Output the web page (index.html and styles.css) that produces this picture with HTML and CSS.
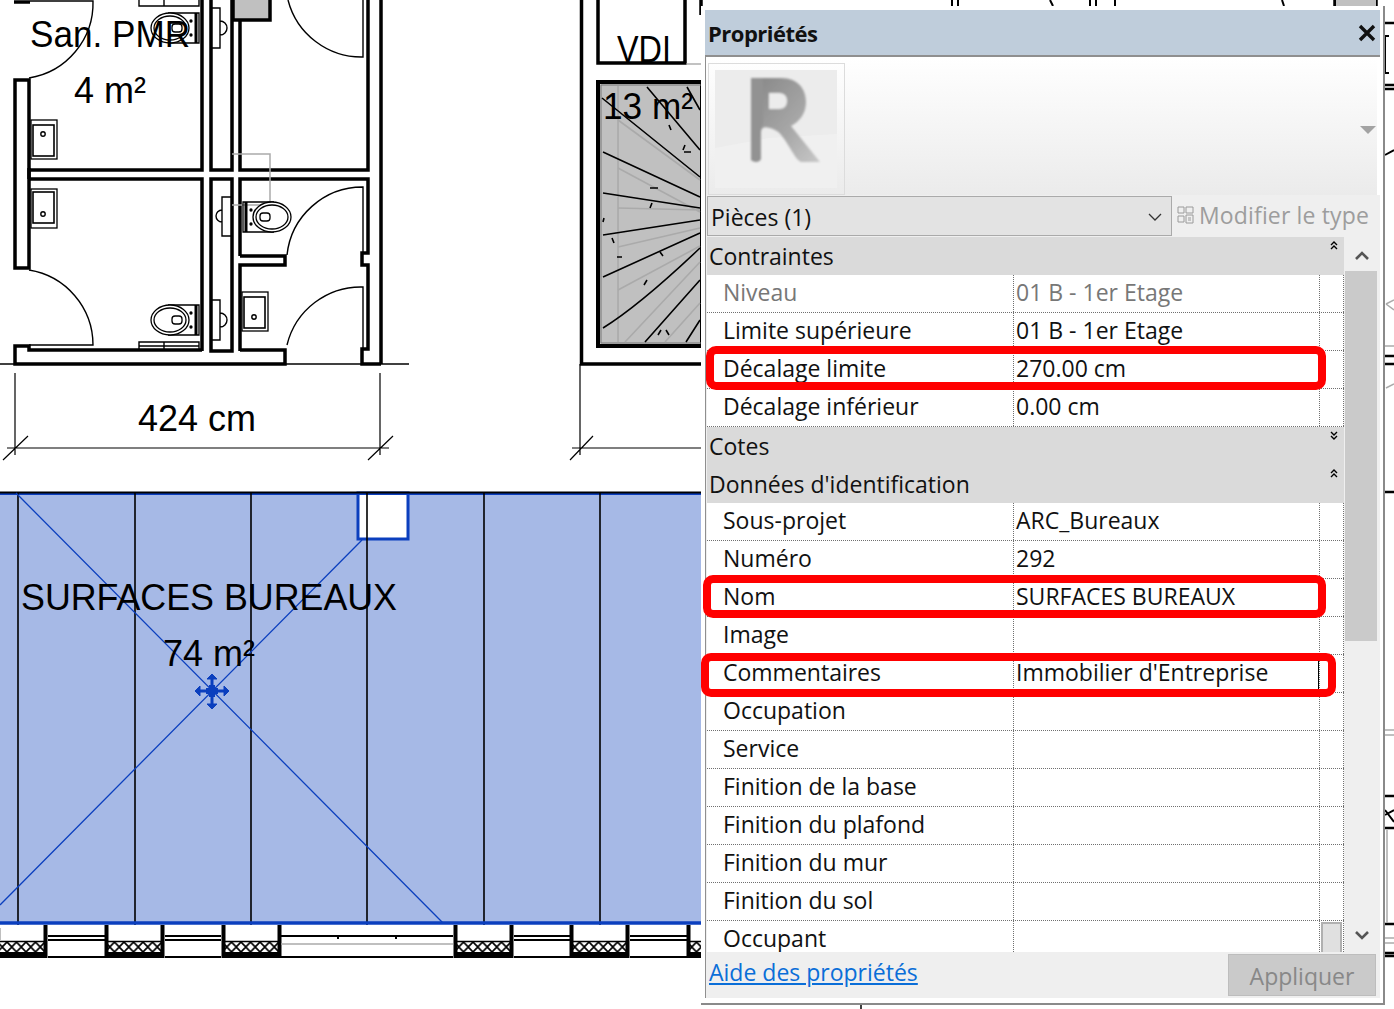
FILE: index.html
```html
<!DOCTYPE html>
<html lang="fr">
<head>
    <meta charset="UTF-8">
    <title>Propriétés</title>
    <link rel="stylesheet" href="styles.css">
</head>
<body>
<div class="canvas">
    <svg class="plan" width="1394" height="1009" viewBox="0 0 1394 1009">
        <defs>
            <pattern id="hatch" width="9.5" height="10" patternUnits="userSpaceOnUse" x="0" y="942">
                <path d="M0 0L9.5 10M9.5 0L0 10" stroke="#000" stroke-width="1.7" fill="none"/>
            </pattern>
            <g id="wc" fill="none" stroke="#000" stroke-width="1.3">
                <path d="M168 305H199V335H168"/>
                <path d="M196 305V335" stroke-width="3"/>
                <ellipse cx="170" cy="320" rx="19" ry="15" fill="#fff"/>
                <ellipse cx="170" cy="320" rx="16" ry="12"/>
                <rect x="172" y="316" width="10" height="8" rx="3"/>
                <circle cx="191" cy="313" r="1" fill="#000"/>
                <circle cx="191" cy="327" r="1" fill="#000"/>
            </g>
            <g id="sink" fill="none" stroke="#000" stroke-width="1.3">
                <rect x="0" y="0" width="26" height="39"/>
                <rect x="2" y="5" width="21" height="31" stroke-width="1.6"/>
            </g>
            <g id="window-block">
                <rect x="0" y="942" width="59" height="10" fill="url(#hatch)"/>
                <path d="M0 941.5H59" stroke="#000" stroke-width="1.5"/>
                <path d="M1.5 925V958M57.5 925V958" stroke="#000" stroke-width="4"/>
                <path d="M0 955H59" stroke="#000" stroke-width="6"/>
            </g>
        </defs>

        <!-- sanitaires -->
        <g fill="none" stroke="#000" stroke-width="3.5">
            <path d="M15 80H29V268H15ZM29 170H202V0M29 179H202V351M211 0V170H232V0M211 351V179H232V351ZM240 20V170H368V0M381 0V364"/>
            <path d="M29 179V168M240 256V179H368V253H362V265H368V349H362V364H381"/>
            <path d="M240 351V265H285V256H240M240 350H285V364H15V346H29V350H202"/>
            <path d="M233 0V20H270V0" fill="#c0c0c0"/>
            <path d="M14 2H30"/>
        </g>
        <g fill="none" stroke="#000" stroke-width="1.4">
            <path d="M0 364H409"/>
            <path d="M30 1H93A76 76 0 0 1 29 78"/>
            <path d="M288 0A76 76 0 0 0 363 57V0"/>
            <path d="M29 270A76 76 0 0 1 93 345H29"/>
            <path d="M287 255A76 76 0 0 1 363 187V253"/>
            <path d="M287 345A76 76 0 0 1 363 287V350"/>
            <path d="M139 350V342H199V350M139 346H199M164 342V350"/>
            <path d="M139 0V6H199V0M164 0V6"/>
            <path d="M212 8H220V48H212M220 21A6 6 0 0 1 220 35"/>
            <path d="M231 197H222V236H231M222 210A6 6 0 0 0 222 222"/>
            <path d="M212 300H220V340H212M220 313A6 6 0 0 1 220 327"/>
            <circle cx="43" cy="134" r="2.2"/>
            <circle cx="43" cy="214" r="2.2"/>
            <circle cx="254" cy="317" r="2.2"/>
        </g>
        <use href="#sink" x="31" y="120"/>
        <use href="#sink" transform="translate(31 228) scale(1 -1)"/>
        <use href="#sink" x="242" y="292"/>
        <use href="#wc"/>
        <use href="#wc" y="-292"/>
        <path d="M232 154H270V205H232" fill="none" stroke="#aaa" stroke-width="1.5"/>
        <use href="#wc" transform="translate(442 -103) scale(-1 1)"/>

        <text class="cad" x="30" y="47" textLength="160" lengthAdjust="spacingAndGlyphs">San. PMR</text>
        <text class="cad" x="74" y="103" textLength="72" lengthAdjust="spacingAndGlyphs">4 m²</text>

        <!-- cote 424 -->
        <g fill="none" stroke="#000" stroke-width="1.2">
            <path d="M7 448H389M15 373V455M380 373V455M3 460L28 436M368 460L393 436"/>
            <path d="M572 448H702M580 364V455M570 460L593 436"/>
        </g>
        <text class="cad" x="138" y="431" textLength="118" lengthAdjust="spacingAndGlyphs">424 cm</text>

        <!-- VDI + escalier -->
        <g fill="none" stroke="#000" stroke-width="3.5">
            <path d="M581.5 0V364H702"/>
            <path d="M598 0V63H685V0"/>
            <path d="M701 0V15"/>
        </g>
        <path d="M686 64H704" stroke="#999" stroke-width="1.2"/>
        <text class="cad" x="617" y="62" textLength="54" lengthAdjust="spacingAndGlyphs">VDI</text>
        <rect x="598" y="82" width="104" height="264" fill="#c0c0c0" stroke="#000" stroke-width="4"/>
        <path d="M601 85H702M601 85V343H702" fill="none" stroke="#777" stroke-width="1"/>
        <g fill="none" stroke="#aaa" stroke-width="1.6">
            <path d="M618 86V342"/>
            <path d="M618 120L700 180M618 168L700 212M618 208L700 210M618 247L700 228M618 290L700 246M625 342L700 262M665 342L700 303"/>
        </g>
        <g fill="none" stroke="#000" stroke-width="1.6">
            <path d="M602 98L700 177M647 87L700 150M687 87L700 110M603 152L700 197M603 193L700 208M603 235L700 220M603 277L700 233M603 328Q640 305 700 248M645 342L700 280M686 342L700 320"/>
            <path d="M669 125L671 130M685 145L683 150M684 152H691M650 188H658M650 208L652 203M604 218L603 222M612 238L614 243M617 257H622M660 252L663 256M644 285L647 280M658 335L661 330M666 330L669 335"/>
        </g>
        <text class="cad" x="603" y="119" textLength="90" lengthAdjust="spacingAndGlyphs">13 m²</text>

        <!-- piece selectionnee -->
        <rect x="0" y="493" width="702" height="430" fill="#a6b9e6"/>
        <rect x="358" y="493" width="50" height="46" fill="#fff" stroke="#0b3fbe" stroke-width="3"/>
        <path d="M0 494H702" stroke="#0b3fbe" stroke-width="2"/>
        <path d="M0 492.5H702" stroke="#000" stroke-width="2"/>
        <path d="M18 493V925M135 493V925M251 493V925M367 493V925M484 493V925M600 493V925" stroke="#000" stroke-width="1.6" fill="none"/>
        <path d="M16 493L443 923M362 540L0 905" stroke="#0b3fbe" stroke-width="1.3" fill="none"/>
        <path d="M0 923H702" stroke="#0b3fbe" stroke-width="3.5"/>
        <text class="cad" x="21" y="610" textLength="376" lengthAdjust="spacingAndGlyphs">SURFACES BUREAUX</text>
        <text class="cad" x="163" y="666" textLength="92" lengthAdjust="spacingAndGlyphs">74 m²</text>
        <g stroke="#0b3fbe" fill="#0b3fbe">
            <path d="M196 691H228M212 675V708" stroke-width="3"/>
            <path d="M195 691L200 686V696ZM229 691L224 686V696ZM212 674L207 679H217ZM212 709L207 704H217Z" stroke-width="1"/>
            <path d="M206 688H218V694H206ZM209 685H215V697H209Z" stroke="none"/>
        </g>

        <!-- bandeau fenetres -->
        <use href="#window-block" x="-12"/>
        <use href="#window-block" x="105"/>
        <use href="#window-block" x="222"/>
        <use href="#window-block" x="454"/>
        <use href="#window-block" x="570"/>
        <use href="#window-block" x="687"/>
        <g stroke="#000" stroke-width="2" fill="none">
            <path d="M48 936H105M48 940H105M48 957H105M165 936H221M165 940H221M165 957H221"/>
            <path d="M281 936H453M281 957H453M514 936H570M514 940H570M514 957H570M630 936H687M630 940H687M630 957H687"/>
            <path d="M338 936V939M396 936V939"/>
        </g>
        <path d="M281 944H453M0 928V940" stroke="#aaa" stroke-width="1.5" fill="none"/>

        <!-- bord haut et droit -->
        <g stroke="#000" fill="none">
            <path d="M1335 0V6M1376 0V6" stroke-width="3.5"/>
            <path d="M1090 0V6M1096 0V6M1115 0V6M952 0V6M958 0V6M1050 0L1053 6M1282 0L1284 6" stroke-width="2"/>
            <path d="M1385 23H1394M1385 85H1394M1385 89H1394M1385 356H1394M1385 364H1394M1385 492H1394M1385 796H1394M1385 828H1394M1385 924H1394M1385 953H1394M1385 956H1394" stroke-width="2.5"/>
            <path d="M1389 36H1385V73H1389M1385 155L1394 150M1385 815L1394 810M1385 810L1394 822" stroke-width="2"/>
            <path d="M861 1003V1009" stroke-width="1.5"/>
        </g>
        <rect x="1336" y="0" width="40" height="6" fill="#c0c0c0"/>
        <path d="M1386 304L1394 300M1386 304L1394 310M1385 346H1394M1386 388L1394 384M1385 730H1394M1385 735H1394M1387 830V923M1385 938H1394M1385 943H1394" stroke="#aaa" stroke-width="1.5" fill="none"/>
    </svg>

    <div class="props-window">
        <div class="props-title">
            <span>Propriétés</span>
            <svg class="close-icon" width="18" height="18" viewBox="0 0 18 18"><path d="M2 2L16 16M16 2L2 16" stroke="#111" stroke-width="3.4" fill="none"/></svg>
        </div>
        <div class="preview">
            <div class="thumb">
                <svg width="135" height="130" viewBox="0 0 135 130">
                    <defs>
                        <linearGradient id="rgrad" x1="0" y1="0" x2="1" y2="1">
                            <stop offset="0" stop-color="#868686"/>
                            <stop offset="0.6" stop-color="#a8a8a8"/>
                            <stop offset="1" stop-color="#c8c8c8"/>
                        </linearGradient>
                        <filter id="soft"><feGaussianBlur stdDeviation="1.1"/></filter>
                    </defs>
                    <rect x="6" y="6" width="122" height="118" fill="#ececec"/>
                    <path d="M6 84L60 74L128 70V124H6Z" fill="#f0f0f0"/>
                    <g filter="url(#soft)">
                        <path d="M42 14H72C90 14 97 26 97 38C97 50 90 58 82 62L111 98H92C84 94 76 70 66 66C58 62 52 62 52 68V94C52 98 46 99 42 96Z" fill="url(#rgrad)"/>
                        <path d="M60 29H70C76 29 78 33 78 37C78 42 75 45 70 45H60Z" fill="#ececec"/>
                        <path d="M42 14L54 14V60C50 64 52 90 52 94C52 98 46 99 42 96Z" fill="#929292"/>
                    </g>
                </svg>
            </div>
            <div class="preview-arrow"></div>
        </div>
        <div class="type-bar">
            <div class="type-combo">
                <span>Pièces (1)</span>
                <svg width="14" height="8" viewBox="0 0 14 8"><path d="M1 1L7 7L13 1" stroke="#333" stroke-width="1.3" fill="none"/></svg>
            </div>
            <div class="edit-type">
                <svg width="17" height="18" viewBox="0 0 17 18"><path d="M1 1H7V7H1ZM1 10H7V16H1ZM9 1H16V7H9ZM9 9H16V17H9ZM11 12H14M11 14H14" stroke="#9a9a9a" fill="none"/></svg>
                <span>Modifier le type</span>
            </div>
        </div>
        <div class="props-body">
            <div class="grid">
                <div class="section">Contraintes<svg class="fold" width="8" height="11" viewBox="0 0 8 11"><path d="M1 5L4 2L7 5M1 9L4 6L7 9" stroke="#000" stroke-width="1.4" fill="none"/></svg></div>
                <div class="row"><div class="label muted">Niveau</div><div class="value muted">01 B - 1er Etage</div><div class="extra"></div></div>
                <div class="row"><div class="label">Limite supérieure</div><div class="value">01 B - 1er Etage</div><div class="extra"></div></div>
                <div class="row"><div class="label">Décalage limite</div><div class="value">270.00 cm</div><div class="extra"></div></div>
                <div class="row"><div class="label">Décalage inférieur</div><div class="value">0.00 cm</div><div class="extra"></div></div>
                <div class="section">Cotes<svg class="fold" width="8" height="11" viewBox="0 0 8 11"><path d="M1 2L4 5L7 2M1 6L4 9L7 6" stroke="#000" stroke-width="1.4" fill="none"/></svg></div>
                <div class="section">Données d'identification<svg class="fold" width="8" height="11" viewBox="0 0 8 11"><path d="M1 5L4 2L7 5M1 9L4 6L7 9" stroke="#000" stroke-width="1.4" fill="none"/></svg></div>
                <div class="row"><div class="label">Sous-projet</div><div class="value">ARC_Bureaux</div><div class="extra"></div></div>
                <div class="row"><div class="label">Numéro</div><div class="value">292</div><div class="extra"></div></div>
                <div class="row"><div class="label">Nom</div><div class="value">SURFACES BUREAUX</div><div class="extra"></div></div>
                <div class="row"><div class="label">Image</div><div class="value"></div><div class="extra"></div></div>
                <div class="row"><div class="label">Commentaires</div><div class="value editing">Immobilier d'Entreprise</div><div class="extra"></div></div>
                <div class="row"><div class="label">Occupation</div><div class="value"></div><div class="extra"></div></div>
                <div class="row"><div class="label">Service</div><div class="value"></div><div class="extra"></div></div>
                <div class="row"><div class="label">Finition de la base</div><div class="value"></div><div class="extra"></div></div>
                <div class="row"><div class="label">Finition du plafond</div><div class="value"></div><div class="extra"></div></div>
                <div class="row"><div class="label">Finition du mur</div><div class="value"></div><div class="extra"></div></div>
                <div class="row"><div class="label">Finition du sol</div><div class="value"></div><div class="extra"></div></div>
                <div class="row last"><div class="label">Occupant</div><div class="value"></div><div class="extra"><div class="extra-btn"></div></div></div>
            </div>
            <div class="scrollbar">
                <svg class="scroll-arrow" width="14" height="9" viewBox="0 0 14 9"><path d="M1 8L7 2L13 8" stroke="#555" stroke-width="2.6" fill="none"/></svg>
                <div class="scroll-thumb"></div>
                <svg class="scroll-arrow bottom" width="14" height="9" viewBox="0 0 14 9"><path d="M1 1L7 7L13 1" stroke="#555" stroke-width="2.6" fill="none"/></svg>
            </div>
        </div>
        <div class="props-footer">
            <a class="help-link" href="#">Aide des propriétés</a>
            <div class="apply-btn">Appliquer</div>
        </div>
    </div>

    <div class="mark mark-1"></div>
    <div class="mark mark-2"></div>
    <div class="mark mark-3"></div>
</div>
</body>
</html>
```
FILE: styles.css
```css
body {
    margin: 0;
    background-color: #fff;
    overflow: hidden;
}
.canvas {
    position: relative;
    width: 1394px;
    height: 1009px;
    overflow: hidden;
}
.plan {
    display: block;
}
.cad {
    font-family: "Liberation Sans", Arial, sans-serif;
    font-size: 37px;
    fill: #000;
}

.props-window {
    position: absolute;
    left: 701px;
    top: 6px;
    width: 684px;
    height: 999px;
    box-sizing: border-box;
    padding: 4px 3px 5px 4px;
    display: flex;
    flex-direction: column;
    background-color: #fff;
    border-right: 2px solid #8a8a8a;
    border-bottom: 2px solid #8a8a8a;
    font-family: "Open Sans", "Noto Sans", sans-serif;
    font-size: 23px;
    color: #111;
}
.props-title {
    height: 47px;
    flex: none;
    box-sizing: border-box;
    display: flex;
    align-items: center;
    justify-content: space-between;
    padding: 0 4px 0 3px;
    background-color: #bfcddb;
    font-weight: 700;
    font-size: 22px;
    letter-spacing: -0.5px;
    border-bottom: 2px solid #8f8f8f;
}
.close-icon {
    display: block;
}
.preview {
    height: 138px;
    flex: none;
    margin-right: 3px;
    padding-top: 6px;
    padding-left: 2px;
    box-sizing: border-box;
    position: relative;
    background: linear-gradient(#fff, #ebebeb);
    border-left: 1px solid #8f8f8f;
}
.thumb {
    width: 137px;
    height: 132px;
    border: 1px solid #dcdcdc;
    box-sizing: border-box;
}
.thumb svg {
    display: block;
}
.preview-arrow {
    position: absolute;
    right: 1px;
    top: 69px;
    width: 0;
    height: 0;
    border-left: 8px solid transparent;
    border-right: 8px solid transparent;
    border-top: 8px solid #a3a3a3;
}
.type-bar, .props-body, .props-footer {
    flex: none;
    border-left: 1px solid #8f8f8f;
    padding-left: 1px;
    background-color: #efefef;
}
.type-bar {
    height: 42px;
    box-sizing: border-box;
    display: flex;
    padding-top: 1px;
}
.type-combo {
    width: 465px;
    height: 40px;
    box-sizing: border-box;
    display: flex;
    align-items: center;
    justify-content: space-between;
    padding: 2px 9px 0 3px;
    background-color: #e3e3e3;
    border: 1px solid #aaa;
}
.edit-type {
    display: flex;
    align-items: center;
    gap: 5px;
    margin-left: 5px;
    margin-top: -4px;
    color: #9d9d9d;
    letter-spacing: 0.15px;
}
.edit-type svg {
    display: block;
}
.props-body {
    height: 715px;
    display: flex;
}
.grid {
    width: 637px;
    flex: none;
    background-color: #fff;
}
.section {
    height: 38px;
    box-sizing: border-box;
    position: relative;
    padding-left: 2px;
    line-height: 38px;
    background-color: #dadada;
}
.fold {
    position: absolute;
    right: 6px;
    top: 3px;
}
.row {
    height: 38px;
    box-sizing: border-box;
    display: grid;
    grid-template-columns: 306px 306px 25px;
    line-height: 34px;
    border-bottom: 1px dotted #707070;
}
.row.last {
    height: 31px;
    border-bottom: 0;
}
.row.last .label {
    padding-top: 3px;
    line-height: 28px;
}
.label {
    padding-left: 16px;
    white-space: nowrap;
}
.value {
    padding-left: 2px;
    border-left: 1px dotted #707070;
    white-space: nowrap;
}
.extra {
    border-left: 1px dotted #707070;
    border-right: 1px dotted #707070;
    position: relative;
}
.muted {
    color: #777;
}
.editing {
    border-right: 1px solid #000;
}
.extra-btn {
    position: absolute;
    left: 1px;
    top: 1px;
    right: 1px;
    bottom: 0;
    box-sizing: border-box;
    background-color: #e0e0e0;
    border: 2px solid #b0b0b0;
    border-bottom: 0;
}
.scrollbar {
    width: 32px;
    margin-left: 1px;
    position: relative;
    background-color: #efefef;
}
.scroll-arrow {
    position: absolute;
    left: 10px;
    top: 14px;
}
.scroll-arrow.bottom {
    top: auto;
    bottom: 12px;
}
.scroll-thumb {
    position: absolute;
    left: 0;
    right: 0;
    top: 34px;
    height: 370px;
    background-color: #cacaca;
}
.props-footer {
    flex: 1;
    display: flex;
    justify-content: space-between;
    padding-right: 4px;
}
.help-link {
    margin-left: 2px;
    margin-top: 2px;
    height: 36px;
    line-height: 36px;
    color: #0a6ed8;
    text-decoration: underline;
}
.apply-btn {
    width: 148px;
    height: 42px;
    margin-top: 2px;
    box-sizing: border-box;
    text-align: center;
    line-height: 42px;
    background-color: #cacaca;
    border: 1px solid #bdbdbd;
    color: #888;
}

.mark {
    position: absolute;
    box-sizing: border-box;
    border: 8px solid #f00;
    border-radius: 10px;
}
.mark-1 {
    left: 706px;
    top: 346px;
    width: 620px;
    height: 44px;
}
.mark-2 {
    left: 703px;
    top: 575px;
    width: 623px;
    height: 43px;
}
.mark-3 {
    left: 701px;
    top: 653px;
    width: 635px;
    height: 44px;
}
```
